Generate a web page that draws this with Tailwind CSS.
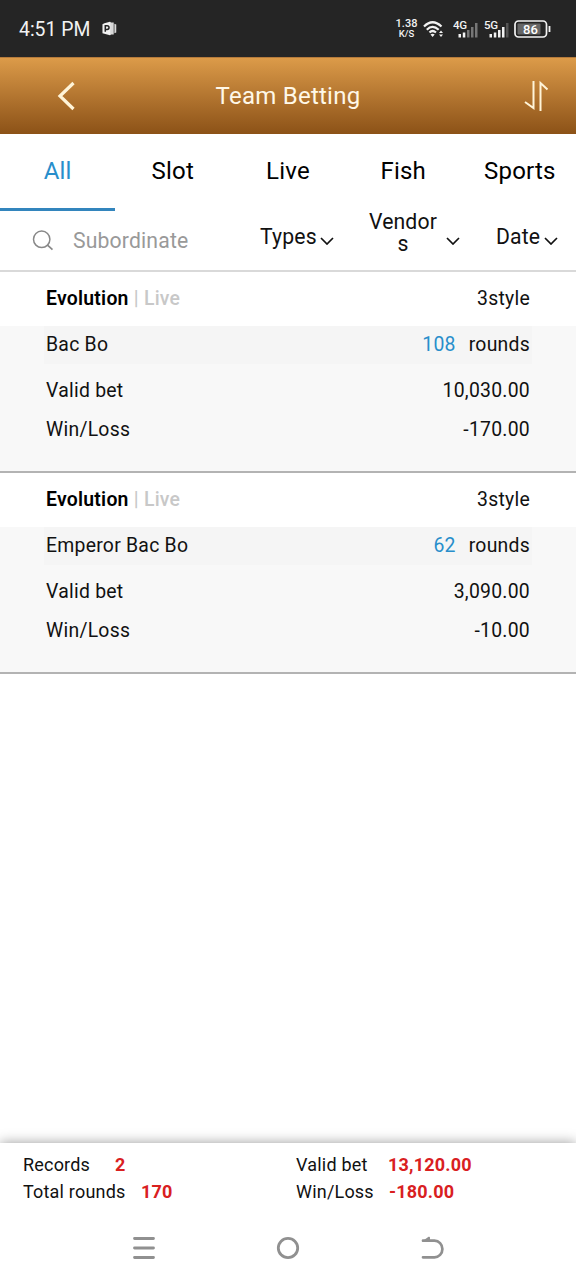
<!DOCTYPE html>
<html lang="en">
<head>
<meta charset="utf-8">
<title>Team Betting</title>
<script src="https://cdn.jsdelivr.net/npm/@tailwindcss/browser@4"></script>
</head>
<body class="bg-white">
<div class="flex h-[1280px] w-[576px] flex-col overflow-hidden bg-white font-['Roboto',sans-serif] text-[19.400px] text-[#111]">

  <div class="flex h-[57px] shrink-0 items-center bg-[#252525] pl-[19px] text-[#f2f2f2]">
    <span class="w-[83px] whitespace-nowrap pt-[3px] text-[19.400px]">4:51 PM</span>
    <svg class="ml-0 h-[15px] w-[15px]" viewBox="0 0 15 16"><path d="M0 3.500 2 2.500 7 1q2-.5 2 1v12q0 1.500-2 1l-5-1.500L0 13z" fill="#f2f2f2"/><path d="M9 1.500h3v13H9zM12.700 3l2 .7v8.600l-2 .7z" fill="#d8d8d8"/><path d="M3 11.500V5h2q2 0 2 2t-2 2H3" fill="none" stroke="#252525" stroke-width="1.600"/></svg>
    <div class="ml-[277px] flex w-[25px] flex-col items-center font-medium">
      <span class="text-[11px] leading-[11px]">1.38</span>
      <span class="text-[9.500px] leading-[10px]">K/S</span>
    </div>
    <svg class="ml-[4px] h-[18px] w-[22px]" viewBox="0 0 22 18"><g fill="none" stroke="#f2f2f2" stroke-width="2.200"><path d="M1 6.500Q9.500-2 18.500 6.500"/><path d="M3.800 9.700Q9.500 4 15.700 9.700"/><path d="M6.500 12.500Q9.500 9.500 13 12.500"/></g><path d="M7.500 14.500Q9.600 13 11.700 14.500L9.600 17zM16 13 18 10.500l2 2.500zM16 14.500l2 2.500 2-2.500z" fill="#f2f2f2"/></svg>
    <svg class="ml-[8px] h-[20px] w-[27px]" viewBox="0 0 27 20"><text x="0" y="10" font-size="11.500" font-weight="500" fill="#f2f2f2" letter-spacing="-.3">4G</text><path d="M5.500 15h2.500v3.500H5.500zM9.800 13.500h2.500v5H9.800z" fill="#f2f2f2"/><path d="M14 11h2.500v7.500H14zM18 8h2.500v10.500H18zM22 4h2.500v14.500H22z" fill="#777"/></svg>
    <svg class="ml-[4px] h-[20px] w-[27px]" viewBox="0 0 27 20"><text x="0" y="10" font-size="11.500" font-weight="500" fill="#f2f2f2" letter-spacing="-.3">5G</text><path d="M5.500 15h2.500v3.500H5.500zM9.800 13.500h2.500v5H9.800zM14 11h2.500v7.500H14zM18 8h2.500v10.500H18z" fill="#f2f2f2"/><path d="M22 4h2.500v14.500H22z" fill="#555"/></svg>
    <svg class="ml-[3px] h-[18px] w-[38px]" viewBox="0 0 38 18"><rect x="1" y="1" width="31.500" height="16" rx="3.500" fill="none" stroke="#f2f2f2" stroke-width="1.700"/><rect x="3.500" y="3.500" width="23" height="11" rx="1" fill="#666"/><path d="M35.500 6v6" stroke="#f2f2f2" stroke-width="1.800"/><text x="16.500" y="13.500" text-anchor="middle" font-size="13" font-weight="500" fill="#fff">86</text></svg>
  </div>

  <header class="grid h-[77px] shrink-0 grid-cols-[80px_1fr_80px] items-center border-t border-[#b57b3c] bg-linear-to-b from-[#dc9b49] to-[#8c5217] text-[#fff8e8]">
    <svg class="ml-[56px] h-[30px] w-[20px]" viewBox="0 0 20 30"><path d="M17.500 2 4 15l13.500 13" fill="none" stroke="#fff4d8" stroke-width="3.200"/></svg>
    <h1 class="text-center text-[24px] tracking-[0.25px]">Team Betting</h1>
    <svg class="ml-[27px] h-[32px] w-[26px]" viewBox="0 0 26 32"><path d="M10.500 1v27L2 22M17.500 31V3l7 6.500" fill="none" stroke="#fff4d8" stroke-width="2"/></svg>
  </header>

  <nav class="grid h-[77px] shrink-0 grid-cols-5 text-center text-[24px] tracking-[0.2px] text-black">
    <div class="border-b-[3px] border-[#3385bd] pt-[19px] text-[#288ecb]">All</div>
    <div class="pt-[19px]">Slot</div>
    <div class="pt-[19px]">Live</div>
    <div class="pt-[19px]">Fish</div>
    <div class="pl-[3px] pt-[19px]">Sports</div>
  </nav>

  <div class="flex h-[61px] shrink-0 items-start border-b-2 border-[#d9d9d9] text-[21.200px] tracking-[0.15px]">
    <svg class="ml-[32px] mt-[19px] h-[21px] w-[22px]" viewBox="0 0 22 21"><circle cx="9.700" cy="9.300" r="8.200" fill="none" stroke="#888" stroke-width="1.500"/><path d="m15.500 15.200 5 4.500" stroke="#888" stroke-width="1.700"/></svg>
    <span class="ml-[19px] mt-[14px] w-[187px] text-[#999]">Subordinate</span>
    <span class="mt-[10px] w-[60px]">Types</span>
    <svg class="mt-[26px] h-[8px] w-[14px]" viewBox="0 0 14 8"><path d="m1 1 6 6 6-6" fill="none" stroke="#111" stroke-width="1.700"/></svg>
    <span class="ml-[34px] w-[70px] text-center leading-[22px]">Vendor<br>s</span>
    <svg class="ml-[8px] mt-[26px] h-[8px] w-[14px]" viewBox="0 0 14 8"><path d="m1 1 6 6 6-6" fill="none" stroke="#111" stroke-width="1.700"/></svg>
    <span class="ml-[36px] mt-[10px] w-[48px]">Date</span>
    <svg class="mt-[26px] h-[8px] w-[14px]" viewBox="0 0 14 8"><path d="m1 1 6 6 6-6" fill="none" stroke="#111" stroke-width="1.700"/></svg>
  </div>

  <main class="flex-1 tracking-[0.25px]">
    <section class="flex h-[201px] flex-col border-b-2 border-[#b3b3b3] bg-[#f8f8f8]">
      <div class="flex h-[54px] items-center justify-between bg-white px-[46px]"><div><b class="font-semibold text-black">Evolution</b><span class="font-medium text-[#c8c8c8]"> | Live</span></div><span>3style</span></div>
      <div class="mx-[44px] flex h-[38px] items-center justify-between bg-[#f5f5f5] px-[2px]"><span>Bac Bo</span><div class="flex gap-[13px]"><span class="text-[#288ecb]">108</span><span>rounds</span></div></div>
      <div class="mt-[7px] flex h-[39px] items-center justify-between px-[46px]"><span>Valid bet</span><span>10,030.00</span></div>
      <div class="flex h-[39px] items-center justify-between px-[46px]"><span>Win/Loss</span><span>-170.00</span></div>
    </section>
    <section class="flex h-[201px] flex-col border-b-2 border-[#b3b3b3] bg-[#f8f8f8]">
      <div class="flex h-[54px] items-center justify-between bg-white px-[46px]"><div><b class="font-semibold text-black">Evolution</b><span class="font-medium text-[#c8c8c8]"> | Live</span></div><span>3style</span></div>
      <div class="mx-[44px] flex h-[38px] items-center justify-between bg-[#f5f5f5] px-[2px]"><span>Emperor Bac Bo</span><div class="flex gap-[13px]"><span class="text-[#288ecb]">62</span><span>rounds</span></div></div>
      <div class="mt-[7px] flex h-[39px] items-center justify-between px-[46px]"><span>Valid bet</span><span>3,090.00</span></div>
      <div class="flex h-[39px] items-center justify-between px-[46px]"><span>Win/Loss</span><span>-10.00</span></div>
    </section>
  </main>

  <footer class="h-[73px] shrink-0 bg-white pl-[23px] pt-[8px] text-[18px] leading-[27px] tracking-[0.2px] shadow-[0_0_12px_rgba(0,0,0,0.4)]">
    <div class="flex"><span class="w-[92px]">Records</span><b class="w-[181px] font-bold text-[#d9201f]">2</b><span class="w-[92px]">Valid bet</span><b class="font-bold text-[#d9201f]">13,120.00</b></div>
    <div class="flex"><span class="w-[118px]">Total rounds</span><b class="w-[155px] font-bold text-[#d9201f]">170</b><span class="w-[93px]">Win/Loss</span><b class="font-bold text-[#d9201f]">-180.00</b></div>
  </footer>
  <div class="relative flex h-[64px] shrink-0 items-center justify-center gap-[120px] bg-white">
    <svg class="h-[24px] w-[24px]" viewBox="0 0 24 24"><path d="M2.500 2.500h19M2.500 12h19M2.500 21.500h19" stroke="#909090" stroke-width="2.800" stroke-linecap="round"/></svg>
    <svg class="h-[24px] w-[24px]" viewBox="0 0 24 24"><circle cx="12" cy="12" r="9.700" fill="none" stroke="#909090" stroke-width="2.800"/></svg>
    <svg class="h-[24px] w-[24px]" viewBox="0 0 24 24"><path d="M3 4.700h11.500a7.900 8.300 0 0 1 0 16.600H3" fill="none" stroke="#909090" stroke-width="2.700" stroke-linecap="round"/><path d="M2 5.500 8.500.800q1.500-.5 1.500 1V5.500z" fill="#909090"/></svg>
  </div>
</div>
</body>
</html>
